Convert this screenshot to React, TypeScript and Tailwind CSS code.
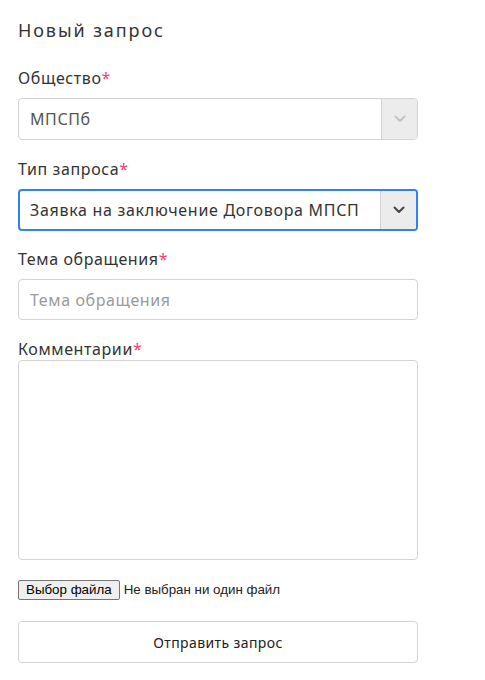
import React from 'react';

const font = { fontFamily: '"Noto Sans", "DejaVu Sans", sans-serif' };

const Label: React.FC<{ text: string }> = ({ text }) => (
  <div className="text-[16px] leading-[20px] tracking-[0.6px] text-[#333333]">
    {text}
    <span className="text-[#f0466b]">*</span>
  </div>
);

const Chevron: React.FC<{ color: string }> = ({ color }) => (
  <svg width="12" height="8" viewBox="0 0 12 8" fill="none">
    <path d="M1.5 1.5L6 6L10.5 1.5" stroke={color} strokeWidth="2" strokeLinecap="round" strokeLinejoin="round" />
  </svg>
);

export default function App() {
  return (
    <div className="min-h-screen bg-white px-[18px] pt-[18px]" style={font}>
      <div className="w-[400px]">
        <h1 className="text-[18px] leading-[24px] tracking-[1.9px] text-[#333333]">Новый запрос</h1>

        <div className="mt-[26px]">
          <Label text="Общество" />
          <div className="mt-[10px] flex h-[42px] overflow-hidden rounded-[4px] border border-[#d4d4d4]">
            <div className="flex flex-1 items-center px-[11px] text-[16px] tracking-[0.6px] text-[#555555]">МПСПб</div>
            <div className="flex w-[36px] items-center justify-center border-l border-[#d4d4d4] bg-[#ececec]">
              <Chevron color="#c4c4c4" />
            </div>
          </div>
        </div>

        <div className="mt-[19px]">
          <Label text="Тип запроса" />
          <div className="mt-[10px] flex h-[42px] overflow-hidden rounded-[4px] border-2 border-[#2e83f0]">
            <div className="flex flex-1 items-center px-[10px] text-[16px] tracking-[0.7px] text-[#333333] whitespace-nowrap">
              Заявка на заключение Договора МПСП
            </div>
            <div className="flex w-[36px] items-center justify-center border-l border-[#d4d4d4] bg-[#ececec]">
              <Chevron color="#444444" />
            </div>
          </div>
        </div>

        <div className="mt-[18px]">
          <Label text="Тема обращения" />
          <div className="mt-[10px] flex h-[41px] items-center rounded-[4px] border border-[#d4d4d4] px-[11px] text-[16px] tracking-[0.6px] text-[#9a9a9a]">
            Тема обращения
          </div>
        </div>

        <div className="mt-[19px]">
          <Label text="Комментарии" />
          <div className="mt-[1px] h-[200px] rounded-[4px] border border-[#d4d4d4]" />
        </div>

        <div className="mt-[20px] flex items-center gap-[4px] text-[13.33px]" style={{ fontFamily: '"Liberation Sans", Arial, sans-serif' }}>
          <span className="rounded-[2px] border border-[#767676] bg-[#efefef] px-[7px] py-[1px] leading-[16px] text-black">Выбор файла</span>
          <span className="text-[#222222]">Не выбран ни один файл</span>
        </div>

        <button className="mt-[21px] flex h-[42px] w-full items-center justify-center rounded-[4px] border border-[#d4d4d4] bg-white text-[14px] tracking-[0.4px] text-[#222222]">
          Отправить запрос
        </button>
      </div>
    </div>
  );
}
